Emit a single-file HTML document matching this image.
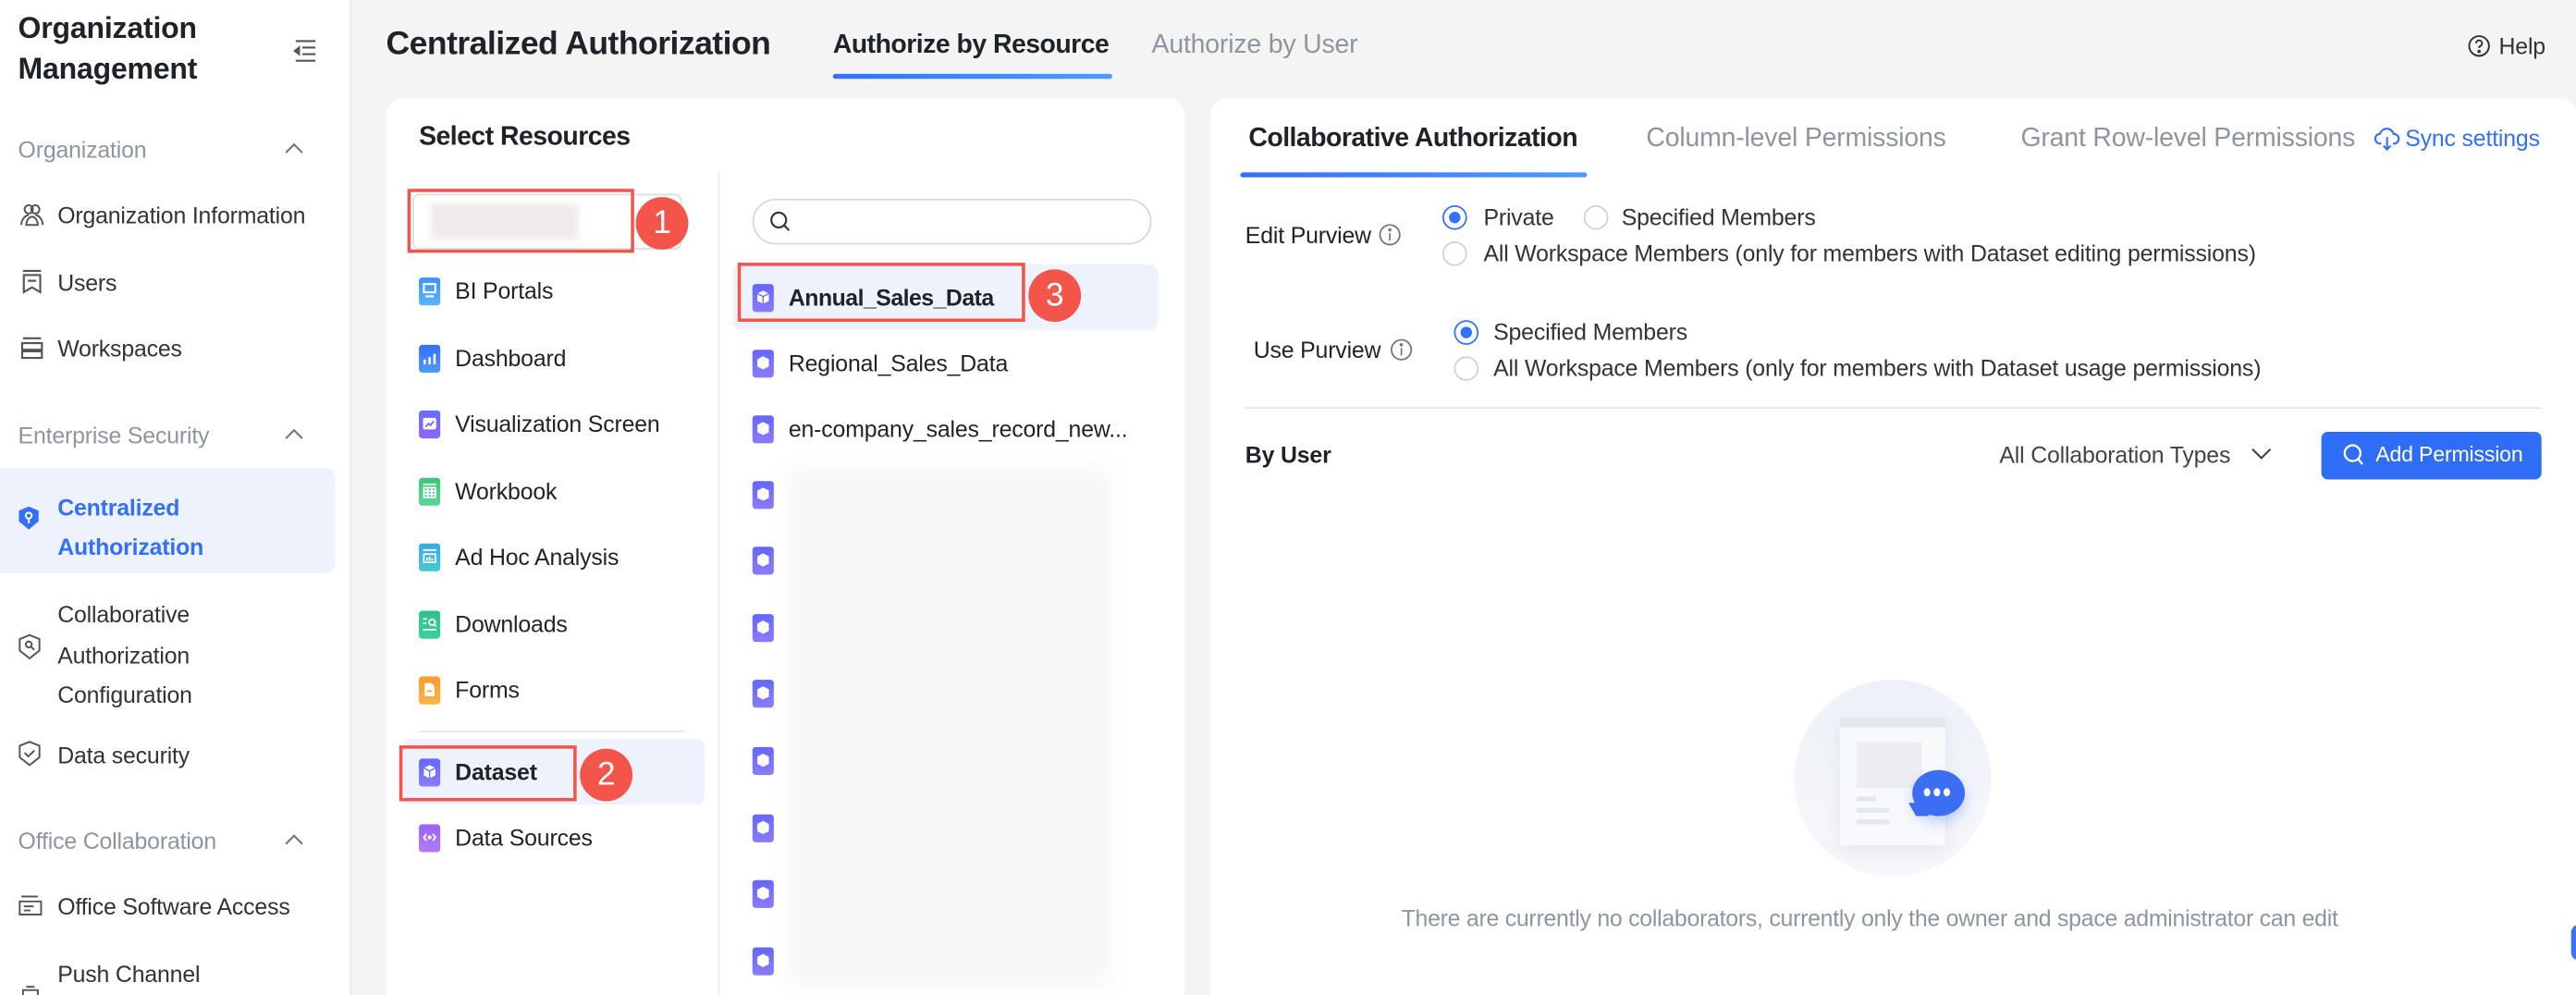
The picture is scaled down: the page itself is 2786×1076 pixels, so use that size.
<!DOCTYPE html>
<html><head><meta charset="utf-8"><style>
*{box-sizing:border-box;margin:0;padding:0}
html,body{width:2786px;height:1076px;overflow:hidden;background:#f4f4f5}
#s{position:absolute;left:0;top:0;width:1568px;height:606px;overflow:hidden;transform:scale(1.77679,1.77558);transform-origin:0 0;font-family:"Liberation Sans",sans-serif;color:#1f2329;font-size:14px;background:#f4f4f5;letter-spacing:-0.1px}
.a{position:absolute;white-space:nowrap}
.side{position:absolute;left:0;top:0;width:214px;height:606px;background:#fff;border-right:1px solid #e5e6eb}
.grp{color:#8f959e;font-size:14px}
.it{color:#333;font-size:14px}
.card{position:absolute;background:#fff;border-radius:10px}
.ti{position:absolute;width:13px;height:17px;border-radius:2px}
.ti svg{position:absolute;left:2px;top:3px}
.badge{position:absolute;width:32px;height:32px;border-radius:50%;background:#f4554a;color:#fff;font-size:20px;text-align:center;line-height:32px}
.rb{position:absolute;border:2px solid #f4554a}
.radio{position:absolute;width:15px;height:15px;border-radius:50%;border:1px solid #d0d3d6;background:#fff}
.radio.on{border-color:#3370ff}
.radio.on:after{content:"";position:absolute;left:3px;top:3px;width:7px;height:7px;border-radius:50%;background:#3370ff}
</style></head><body><div id="s">

<div class="side">
  <div class="a" style="left:11px;top:5px;font-size:18px;font-weight:bold;line-height:25px;color:#1f2329">Organization<br>Management</div>
  <svg class="a" style="left:178px;top:24px" width="15" height="14" viewBox="0 0 15 14" fill="none" stroke="#555" stroke-width="1.2"><path d="M2 1h12M6 5h8M6 9h8M2 13h12"/><path d="M4 5L1.5 7 4 9z" fill="#555"/></svg>
  <div class="a grp" style="left:11px;top:83px">Organization</div>
  <svg class="a" style="left:173px;top:86px" width="12" height="8"><path d="M1 7l5-5 5 5" fill="none" stroke="#777" stroke-width="1.2"/></svg>
  <svg class="a" style="left:12px;top:123px" width="15" height="15" viewBox="0 0 15 15" fill="none" stroke="#555" stroke-width="1.1"><circle cx="5.5" cy="4.5" r="2.5"/><circle cx="9.5" cy="4.5" r="2.5"/><path d="M1 14c0-4 3-6 4.5-6M14 14c0-4-3-6-4.5-6M4 14c0-3 2-5 3.5-5s3.5 2 3.5 5z"/></svg>
  <div class="a it" style="left:35px;top:123px">Organization Information</div>
  <svg class="a" style="left:13px;top:164px" width="13" height="15" viewBox="0 0 13 15" fill="none" stroke="#555" stroke-width="1.2"><path d="M1 1h11M1.5 3.5h10v10.5l-5-3-5 3z M4 7h5"/></svg>
  <div class="a it" style="left:35px;top:164px">Users</div>
  <svg class="a" style="left:12px;top:205px" width="15" height="14" viewBox="0 0 15 14" fill="none" stroke="#555" stroke-width="1.2"><path d="M2 1h11M1.5 4h12v4h-12zM1.5 9h12v4h-12z"/></svg>
  <div class="a it" style="left:35px;top:204px">Workspaces</div>
  <div class="a grp" style="left:11px;top:257px">Enterprise Security</div>
  <svg class="a" style="left:173px;top:260px" width="12" height="8"><path d="M1 7l5-5 5 5" fill="none" stroke="#777" stroke-width="1.2"/></svg>
  <div class="a" style="left:0;top:285px;width:204px;height:64px;background:#eef2fd;border-radius:0 6px 6px 0"></div>
  <svg class="a" style="left:11px;top:308px" width="13" height="15" viewBox="0 0 13 15"><path d="M6.5 0.5L12.5 3v6.5L6.5 14.5 0.5 9.5V3z" fill="#3370ff"/><circle cx="6.5" cy="6" r="1.8" fill="none" stroke="#fff" stroke-width="1.1"/><path d="M6.5 7.8v3" stroke="#fff" stroke-width="1.1"/></svg>
  <div class="a" style="left:35px;top:297px;color:#3370ff;font-size:14px;font-weight:bold;line-height:24px">Centralized<br>Authorization</div>
  <svg class="a" style="left:11px;top:386px" width="14" height="16" viewBox="0 0 14 16" fill="none" stroke="#555" stroke-width="1.1"><path d="M7 0.8l6 2.4v7L7 15 1 10.2v-7z"/><circle cx="6.5" cy="6.5" r="1.8"/><path d="M7.8 7.8l2 2"/></svg>
  <div class="a it" style="left:35px;top:362px;line-height:24.5px">Collaborative<br>Authorization<br>Configuration</div>
  <svg class="a" style="left:11px;top:451px" width="14" height="16" viewBox="0 0 14 16" fill="none" stroke="#555" stroke-width="1.1"><path d="M7 0.8l6 2.4v7L7 15 1 10.2v-7z"/><path d="M4 7.5l2.2 2.2L10 6"/></svg>
  <div class="a it" style="left:35px;top:452px">Data security</div>
  <div class="a grp" style="left:11px;top:504px">Office Collaboration</div>
  <svg class="a" style="left:173px;top:507px" width="12" height="8"><path d="M1 7l5-5 5 5" fill="none" stroke="#777" stroke-width="1.2"/></svg>
  <svg class="a" style="left:11px;top:545px" width="15" height="14" viewBox="0 0 15 14" fill="none" stroke="#555" stroke-width="1.1"><path d="M2 1h10M1 4h13v8H1zM3.5 7h6M3.5 9.5h4"/></svg>
  <div class="a it" style="left:35px;top:544px">Office Software Access</div>
  <svg class="a" style="left:11px;top:600px" width="15" height="10" viewBox="0 0 15 10" fill="none" stroke="#555" stroke-width="1.1"><path d="M5 1h5M3 3h9v6H3z"/></svg>
  <div class="a it" style="left:35px;top:585px">Push Channel</div>
</div>

<div class="a" style="left:235px;top:16px;font-size:20px;font-weight:bold;color:#1f2329;letter-spacing:-0.3px">Centralized Authorization</div>
<div class="a" style="left:507px;top:19px;font-size:16px;font-weight:bold;color:#1f2329;letter-spacing:-0.3px">Authorize by Resource</div>
<div class="a" style="left:507px;top:45px;width:170px;height:3px;border-radius:2px;background:linear-gradient(90deg,#3370ff,#4e9bff)"></div>
<div class="a" style="left:701px;top:19px;font-size:16px;color:#8f959e">Authorize by User</div>
<svg class="a" style="left:1502px;top:21px" width="14" height="14" viewBox="0 0 14 14" fill="none" stroke="#333" stroke-width="1.1"><circle cx="7" cy="7" r="6"/><path d="M5.2 5.4a1.8 1.8 0 1 1 2.4 1.7c-.5.2-.6.5-.6 1.1"/><circle cx="7" cy="10.3" r=".5" fill="#333"/></svg>
<div class="a" style="left:1521px;top:20px;font-size:14px;color:#333">Help</div>

<div class="card" style="left:235px;top:60px;width:486px;height:560px"></div>
<div class="a" style="left:255px;top:75px;font-size:16px;font-weight:bold;letter-spacing:-0.3px">Select Resources</div>
<div class="a" style="left:437px;top:105px;width:1px;height:501px;background:#ececee"></div>
<div class="a" style="left:251px;top:118px;width:164px;height:34px;border:1px solid #dcdde0;border-radius:4px;background:#fff"></div>
<div class="a" style="left:262px;top:124px;width:90px;height:22px;background:#f1eaea;filter:blur(2px)"></div>
<div class="rb" style="left:248px;top:115px;width:138px;height:39px"></div>
<div class="badge" style="left:387px;top:120px">1</div>

<div class="ti" style="left:255px;top:169px;background:linear-gradient(#3e92ff,#5ab4ff)"><svg width="9" height="10" viewBox="0 0 9 10" fill="none" stroke="#fff" stroke-width="1.2"><rect x="1" y="1" width="7" height="5"/><path d="M2 8.5h5"/></svg></div>
<div class="a it" style="left:277px;top:169px;color:#1f2329">BI Portals</div>
<div class="ti" style="left:255px;top:210px;background:linear-gradient(#3370ff,#4d9bff)"><svg width="9" height="10" viewBox="0 0 9 10" stroke="#fff" stroke-width="1.4"><path d="M1.5 9V6M4.5 9V4.5M7.5 9V2.5"/></svg></div>
<div class="a it" style="left:277px;top:210px;color:#1f2329">Dashboard</div>
<div class="ti" style="left:255px;top:250px;background:linear-gradient(#6a6cff,#8b67f5)"><svg width="9" height="10" viewBox="0 0 9 10"><rect x=".5" y="1.5" width="8" height="7" rx="1" fill="#fff"/><path d="M2 7l2-2 1 1 2-2.5" fill="none" stroke="#7066ff" stroke-width="1"/></svg></div>
<div class="a it" style="left:277px;top:250px;color:#1f2329">Visualization Screen</div>
<div class="ti" style="left:255px;top:291px;background:linear-gradient(#3ec476,#5ed59a)"><svg width="9" height="10" viewBox="0 0 9 10" fill="none" stroke="#fff" stroke-width="1"><path d="M0.5 1h8M1 3h7v6H1zM1 5h7M1 7h7M3.3 3v6M5.7 3v6"/></svg></div>
<div class="a it" style="left:277px;top:291px;color:#1f2329">Workbook</div>
<div class="ti" style="left:255px;top:331px;background:linear-gradient(#38a9e8,#45cbd0)"><svg width="9" height="10" viewBox="0 0 9 10" fill="none" stroke="#fff" stroke-width="1"><path d="M0.5 1h8M1 3.5h7v5H1zM3 5.5v2M4.5 5v2.5M6 6v1.5"/></svg></div>
<div class="a it" style="left:277px;top:331px;color:#1f2329">Ad Hoc Analysis</div>
<div class="ti" style="left:255px;top:372px;background:linear-gradient(#2fc18a,#38cf9a)"><svg width="9" height="10" viewBox="0 0 9 10" fill="none" stroke="#fff" stroke-width="1"><path d="M0.5 2h2.5M0.5 4.5h2M0.5 8.5h8"/><circle cx="6" cy="4" r="1.8"/><path d="M7.3 5.3l1.2 1.2"/></svg></div>
<div class="a it" style="left:277px;top:372px;color:#1f2329">Downloads</div>
<div class="ti" style="left:255px;top:412px;background:linear-gradient(#ff9a2e,#ffb347)"><svg width="9" height="10" viewBox="0 0 9 10"><path d="M1.5 1h4l2 2v6h-6z" fill="#fff"/><path d="M3 6h3" stroke="#ffa23a" stroke-width="1"/></svg></div>
<div class="a it" style="left:277px;top:412px;color:#1f2329">Forms</div>
<div class="a" style="left:255px;top:445px;width:162px;height:1px;background:#e8e8ea"></div>
<div class="a" style="left:245px;top:450px;width:184px;height:40px;background:#eef2fd;border-radius:5px"></div>
<div class="ti" style="left:255px;top:462px;background:linear-gradient(#6466ff,#8a7bff)"><svg width="9" height="10" viewBox="0 0 9 10"><path d="M4.5 1L8 2.8v4.5L4.5 9 1 7.3V2.8z" fill="#fff"/><path d="M1 2.8l3.5 1.8L8 2.8M4.5 4.6V9" fill="none" stroke="#7170ff" stroke-width=".8"/></svg></div>
<div class="a" style="left:277px;top:462px;font-weight:bold;color:#1f2329">Dataset</div>
<div class="rb" style="left:243px;top:454px;width:108px;height:34px"></div>
<div class="badge" style="left:353px;top:456px">2</div>
<div class="ti" style="left:255px;top:502px;background:linear-gradient(#9a63f5,#b07af7)"><svg width="9" height="10" viewBox="0 0 9 10" fill="none" stroke="#fff" stroke-width="1.1"><path d="M2.5 3L1 5l1.5 2M6.5 3L8 5 6.5 7"/><circle cx="4.5" cy="5" r=".6" fill="#fff"/></svg></div>
<div class="a it" style="left:277px;top:502px;color:#1f2329">Data Sources</div>

<div class="a" style="left:458px;top:121px;width:243px;height:28px;border:1px solid #d6d7da;border-radius:14px"></div>
<svg class="a" style="left:468px;top:128px" width="14" height="14" viewBox="0 0 14 14" fill="none" stroke="#333" stroke-width="1.2"><circle cx="6" cy="6" r="4.5"/><path d="M9.3 9.3l3 3"/></svg>
<div class="a" style="left:446px;top:161px;width:259px;height:40px;background:#eef2fd;border-radius:5px"></div>
<div class="rb" style="left:449px;top:160px;width:175px;height:36px"></div>
<div class="badge" style="left:626px;top:164px">3</div>
<div class="ti" style="left:458px;top:173px;background:linear-gradient(#6466ff,#8a7bff)"><svg width="9" height="10" viewBox="0 0 9 10"><path d="M4.5 1L8 2.8v4.5L4.5 9 1 7.3V2.8z" fill="#fff"/><path d="M1 2.8l3.5 1.8L8 2.8M4.5 4.6V9" fill="none" stroke="#7170ff" stroke-width=".8"/></svg></div>
<div class="a" style="left:480px;top:173px;font-weight:bold;color:#1f2329;letter-spacing:-0.3px">Annual_Sales_Data</div>
<div class="ti" style="left:458px;top:213px;background:linear-gradient(#6466ff,#8a7bff)"><svg width="9" height="10" viewBox="0 0 9 10"><path d="M4.5 1L8 2.8v4.5L4.5 9 1 7.3V2.8z" fill="#fff"/></svg></div>
<div class="a" style="left:480px;top:213px;color:#1f2329">Regional_Sales_Data</div>
<div class="ti" style="left:458px;top:253px;background:linear-gradient(#6466ff,#8a7bff)"><svg width="9" height="10" viewBox="0 0 9 10"><path d="M4.5 1L8 2.8v4.5L4.5 9 1 7.3V2.8z" fill="#fff"/></svg></div>
<div class="a" style="left:480px;top:253px;color:#1f2329">en-company_sales_record_new...</div>

<div class="ti" style="left:458px;top:293px;background:linear-gradient(#6466ff,#8a7bff)"><svg width="9" height="10" viewBox="0 0 9 10"><path d="M4.5 1L8 2.8v4.5L4.5 9 1 7.3V2.8z" fill="#fff"/></svg></div>
<div class="ti" style="left:458px;top:333px;background:linear-gradient(#6466ff,#8a7bff)"><svg width="9" height="10" viewBox="0 0 9 10"><path d="M4.5 1L8 2.8v4.5L4.5 9 1 7.3V2.8z" fill="#fff"/></svg></div>
<div class="ti" style="left:458px;top:374px;background:linear-gradient(#6466ff,#8a7bff)"><svg width="9" height="10" viewBox="0 0 9 10"><path d="M4.5 1L8 2.8v4.5L4.5 9 1 7.3V2.8z" fill="#fff"/></svg></div>
<div class="ti" style="left:458px;top:414px;background:linear-gradient(#6466ff,#8a7bff)"><svg width="9" height="10" viewBox="0 0 9 10"><path d="M4.5 1L8 2.8v4.5L4.5 9 1 7.3V2.8z" fill="#fff"/></svg></div>
<div class="ti" style="left:458px;top:455px;background:linear-gradient(#6466ff,#8a7bff)"><svg width="9" height="10" viewBox="0 0 9 10"><path d="M4.5 1L8 2.8v4.5L4.5 9 1 7.3V2.8z" fill="#fff"/></svg></div>
<div class="ti" style="left:458px;top:496px;background:linear-gradient(#6466ff,#8a7bff)"><svg width="9" height="10" viewBox="0 0 9 10"><path d="M4.5 1L8 2.8v4.5L4.5 9 1 7.3V2.8z" fill="#fff"/></svg></div>
<div class="ti" style="left:458px;top:536px;background:linear-gradient(#6466ff,#8a7bff)"><svg width="9" height="10" viewBox="0 0 9 10"><path d="M4.5 1L8 2.8v4.5L4.5 9 1 7.3V2.8z" fill="#fff"/></svg></div>
<div class="ti" style="left:458px;top:577px;background:linear-gradient(#6466ff,#8a7bff)"><svg width="9" height="10" viewBox="0 0 9 10"><path d="M4.5 1L8 2.8v4.5L4.5 9 1 7.3V2.8z" fill="#fff"/></svg></div>
<div class="a" style="left:481px;top:285px;width:195px;height:315px;background:#f6f6f7;filter:blur(6px)"></div>

<div class="card" style="left:737px;top:60px;width:831px;height:560px"></div>
<div class="a" style="left:760px;top:76px;font-size:16px;font-weight:bold;color:#1f2329;letter-spacing:-0.3px">Collaborative Authorization</div>
<div class="a" style="left:755px;top:105px;width:211px;height:3px;border-radius:2px;background:linear-gradient(90deg,#3370ff,#4e9bff)"></div>
<div class="a" style="left:1002px;top:76px;font-size:16px;color:#8f959e">Column-level Permissions</div>
<div class="a" style="left:1230px;top:76px;font-size:16px;color:#8f959e">Grant Row-level Permissions</div>
<svg class="a" style="left:1445px;top:77px" width="16" height="15" viewBox="0 0 16 15" fill="none" stroke="#3370ff" stroke-width="1.2"><path d="M4.5 10.5H4a3 3 0 0 1-.3-6A4.3 4.3 0 0 1 12 4.6a2.9 2.9 0 0 1 .3 5.9h-.8M8 6.5v7.5M5.8 11.8L8 14l2.2-2.2"/></svg>
<div class="a" style="left:1464px;top:76px;font-size:14px;color:#3370ff">Sync settings</div>

<div class="a" style="left:758px;top:135px;color:#1f2329">Edit Purview</div>
<svg class="a" style="left:839px;top:136px" width="14" height="14" viewBox="0 0 14 14" fill="none" stroke="#777" stroke-width="1"><circle cx="7" cy="7" r="6"/><path d="M7 6v4.5"/><circle cx="7" cy="4" r=".5" fill="#777"/></svg>
<div class="radio on" style="left:878px;top:125px"></div><div class="a" style="left:903px;top:124px;color:#333">Private</div>
<div class="radio" style="left:964px;top:125px"></div><div class="a" style="left:987px;top:124px;color:#333">Specified Members</div>
<div class="radio" style="left:878px;top:147px"></div><div class="a" style="left:903px;top:146px;color:#333">All Workspace Members (only for members with Dataset editing permissions)</div>

<div class="a" style="left:763px;top:205px;color:#1f2329">Use Purview</div>
<svg class="a" style="left:846px;top:206px" width="14" height="14" viewBox="0 0 14 14" fill="none" stroke="#777" stroke-width="1"><circle cx="7" cy="7" r="6"/><path d="M7 6v4.5"/><circle cx="7" cy="4" r=".5" fill="#777"/></svg>
<div class="radio on" style="left:885px;top:195px"></div><div class="a" style="left:909px;top:194px;color:#333">Specified Members</div>
<div class="radio" style="left:885px;top:217px"></div><div class="a" style="left:909px;top:216px;color:#333">All Workspace Members (only for members with Dataset usage permissions)</div>

<div class="a" style="left:758px;top:248px;width:789px;height:1px;background:#e4e5e7"></div>
<div class="a" style="left:758px;top:269px;font-weight:bold;color:#1f2329">By User</div>
<div class="a" style="left:1217px;top:269px;color:#444">All Collaboration Types</div>
<svg class="a" style="left:1370px;top:272px" width="13" height="9"><path d="M1 1.5l5.5 5.5 5.5-5.5" fill="none" stroke="#444" stroke-width="1.2"/></svg>
<div class="a" style="left:1413px;top:263px;width:134px;height:29px;background:#2f6df6;border-radius:4px"></div>
<svg class="a" style="left:1426px;top:270px" width="14" height="15" viewBox="0 0 14 15" fill="none" stroke="#fff" stroke-width="1.3"><circle cx="6" cy="6" r="4.8"/><path d="M9.5 9.7l2.5 3"/></svg>
<div class="a" style="left:1446px;top:269px;color:#fff;font-size:13px">Add Permission</div>

<div class="a" style="left:1092px;top:414px;width:120px;height:120px;border-radius:50%;background:linear-gradient(180deg,#eef1f8,#f7f8fb)"></div>
<div class="a" style="left:1120px;top:437px;width:64px;height:78px;background:#f8f9fb;box-shadow:0 4px 10px rgba(200,205,220,.4)"></div>
<div class="a" style="left:1120px;top:437px;width:64px;height:6px;background:#e4e7ee"></div>
<div class="a" style="left:1130px;top:452px;width:40px;height:28px;background:#eceef3"></div>
<div class="a" style="left:1130px;top:485px;width:12px;height:3px;background:#e4e7ee"></div>
<div class="a" style="left:1130px;top:492px;width:20px;height:3px;background:#e4e7ee"></div>
<div class="a" style="left:1130px;top:499px;width:20px;height:3px;background:#e4e7ee"></div>
<div class="a" style="left:1164px;top:469px;width:32px;height:28px;border-radius:50%;background:#3c6ef5;box-shadow:0 4px 8px rgba(60,110,245,.3)"></div>
<div class="a" style="left:1164px;top:489px;width:8px;height:8px;background:#3c6ef5;transform:skewX(30deg)"></div>
<div class="a" style="left:1171px;top:480px;width:4px;height:5px;border-radius:50%;background:#fff;box-shadow:6px 0 #fff,12px 0 #fff"></div>
<div class="a" style="left:853px;top:551px;font-size:14px;color:#8f959e;letter-spacing:-0.15px">There are currently no collaborators, currently only the owner and space administrator can edit</div>
<div class="a" style="left:1565px;top:563px;width:10px;height:22px;border-radius:5px;background:#3c74f5"></div>
</div></body></html>
